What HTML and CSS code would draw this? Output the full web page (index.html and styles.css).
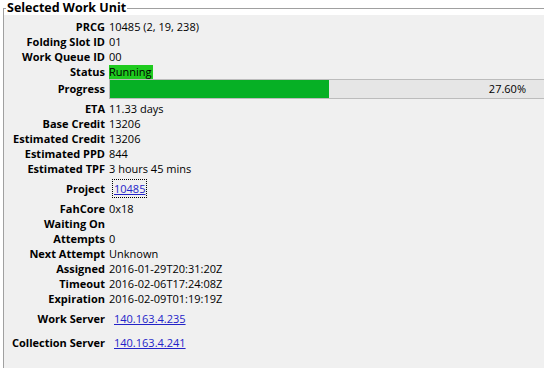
FILE: index.html
```html
<!DOCTYPE html>
<html lang="en">
<head>
    <meta charset="UTF-8">
    <title>Selected Work Unit</title>
    <link rel="stylesheet" href="styles.css">
</head>
<body>

    <fieldset class="group">
        <legend>Selected Work Unit</legend>

        <div class="panel">
            <div class="row"><span class="label">PRCG</span><span class="value">10485 (2, 19, 238)</span></div>
            <div class="row"><span class="label">Folding Slot ID</span><span class="value">01</span></div>
            <div class="row"><span class="label">Work Queue ID</span><span class="value">00</span></div>
            <div class="row"><span class="label">Status</span><span class="value"><span class="status">Running</span></span></div>

            <div class="row row-progress">
                <span class="label">Progress</span>
                <div class="bar">
                    <div class="fill" style="width: 219px;"></div>
                    <span class="pct">27.60%</span>
                </div>
            </div>

            <div class="row"><span class="label">ETA</span><span class="value">11.33 days</span></div>
            <div class="row"><span class="label">Base Credit</span><span class="value">13206</span></div>
            <div class="row"><span class="label">Estimated Credit</span><span class="value">13206</span></div>
            <div class="row"><span class="label">Estimated PPD</span><span class="value">844</span></div>
            <div class="row"><span class="label">Estimated TPF</span><span class="value">3 hours 45 mins</span></div>

            <div class="row row-link">
                <span class="label">Project</span>
                <span class="value"><a href="#" class="link focused">10485</a></span>
            </div>

            <div class="row"><span class="label">FahCore</span><span class="value">0x18</span></div>
            <div class="row"><span class="label">Waiting On</span><span class="value"></span></div>
            <div class="row"><span class="label">Attempts</span><span class="value">0</span></div>
            <div class="row"><span class="label">Next Attempt</span><span class="value">Unknown</span></div>
            <div class="row"><span class="label">Assigned</span><span class="value">2016-01-29T20:31:20Z</span></div>
            <div class="row"><span class="label">Timeout</span><span class="value">2016-02-06T17:24:08Z</span></div>
            <div class="row"><span class="label">Expiration</span><span class="value">2016-02-09T01:19:19Z</span></div>

            <div class="row row-server">
                <span class="label">Work Server</span>
                <span class="value"><a href="#" class="link">140.163.4.235</a></span>
            </div>
            <div class="row row-server">
                <span class="label">Collection Server</span>
                <span class="value"><a href="#" class="link">140.163.4.241</a></span>
            </div>
        </div>
    </fieldset>

</body>
</html>
```

FILE: styles.css
```css
body {
    margin: 0;
    background-color: #ffffff;
    font-family: 'Open Sans', 'Liberation Sans', sans-serif;
    font-size: 11px;
    color: #000;
    overflow: hidden;
}

.group {
    margin: 0 0 0 3px;
    padding: 0;
    border: none;
    border-top: 1px solid #a0a0a0;
    border-left: 1px solid #a0a0a0;
    min-width: 0;
}

.group legend {
    margin-left: 2px;
    padding: 0 1px;
    font-weight: bold;
    font-size: 12.5px;
    line-height: 16px;
}

.panel {
    margin-top: -1px;
    background-color: #f0f0f0;
    padding-top: 4px;
    min-height: 360px;
}

.row {
    display: grid;
    grid-template-columns: 101px 1fr;
    column-gap: 4px;
    align-items: center;
    height: 15px;
    line-height: 15px;
}

.label {
    text-align: right;
    font-weight: bold;
    white-space: nowrap;
}

.value {
    white-space: nowrap;
}

.status {
    display: inline-block;
    background-color: #1fcb1f;
    padding-right: 1px;
    line-height: 14px;
}

.row-progress {
    height: 22px;
    align-items: start;
}

.row-progress .label {
    line-height: 20px;
}

.bar {
    display: grid;
    height: 18px;
    border: 1px solid #bcbcbc;
    border-right: none;
    background-color: #e6e6e6;
}

.fill,
.pct {
    grid-area: 1 / 1;
}

.fill {
    background-color: #06b025;
}

.pct {
    justify-self: end;
    padding-right: 18px;
    line-height: 18px;
}

.row-link {
    height: 25px;
}

.row-server {
    height: 24px;
}

.link {
    color: #2323c8;
    text-decoration: underline;
    margin-left: 5px;
}

.focused {
    display: inline-block;
    margin-left: 3px;
    padding: 1px 1px;
    line-height: 15px;
    border: 1px dotted #000;
}
```
